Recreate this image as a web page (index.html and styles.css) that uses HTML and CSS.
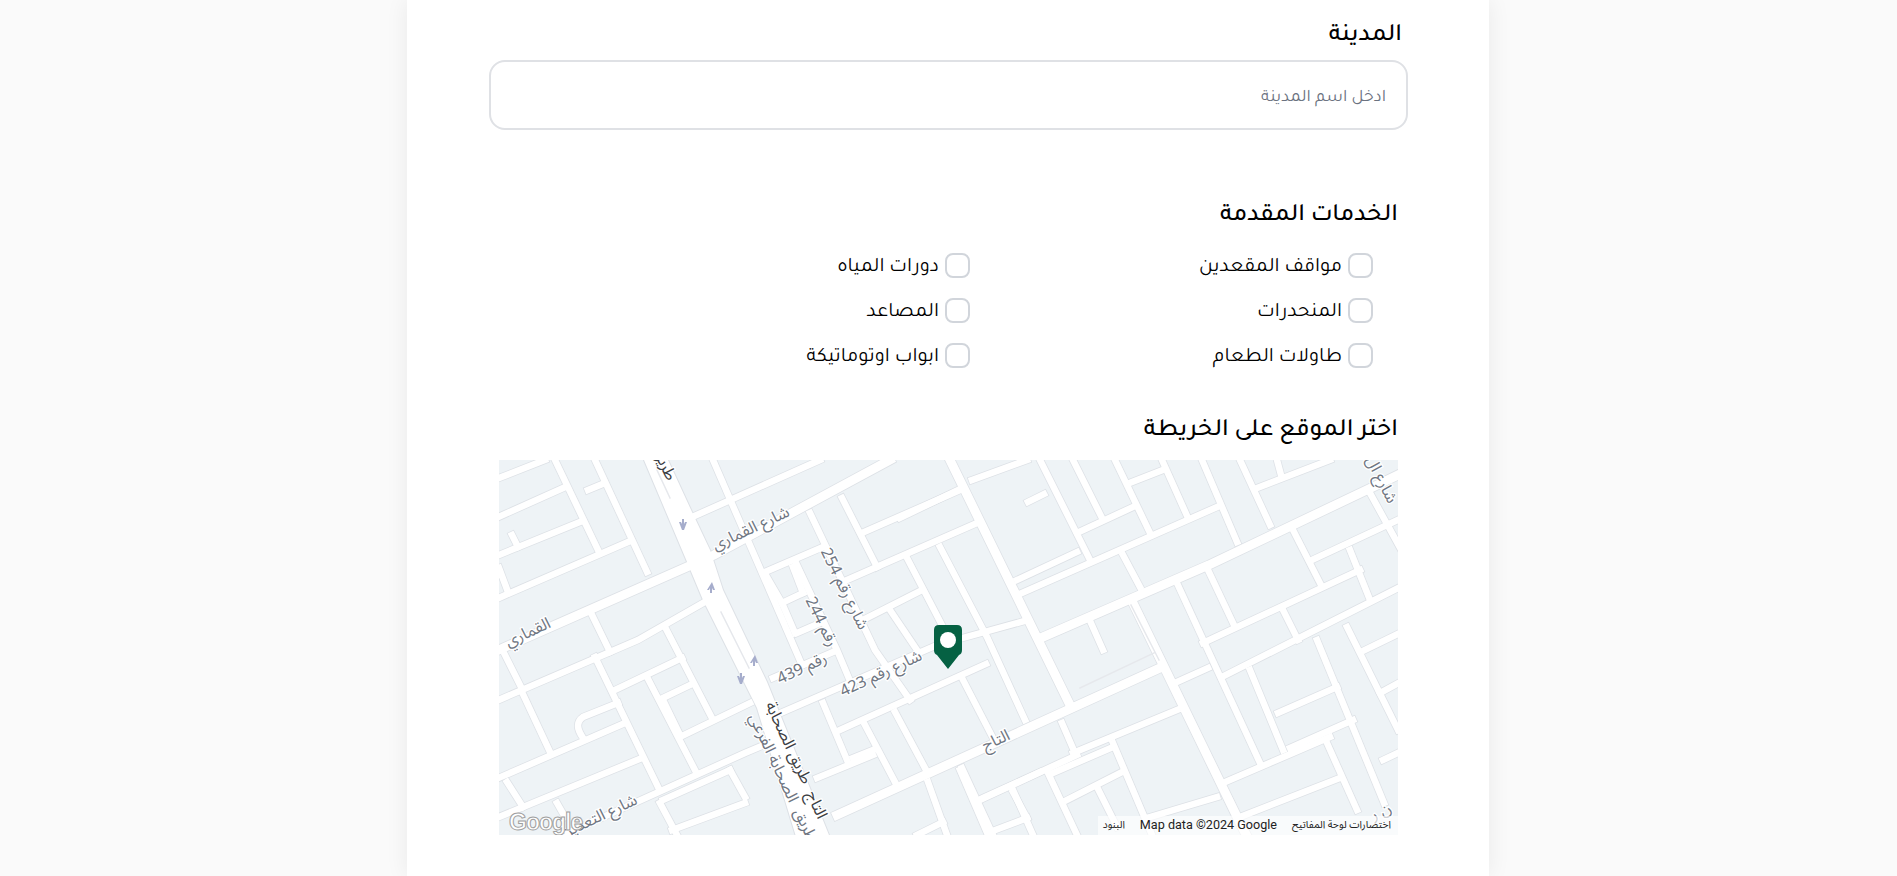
FILE: index.html
```html
<!DOCTYPE html>
<html lang="ar" dir="rtl">
<head>
<meta charset="utf-8">
<title>المدينة</title>
<link rel="stylesheet" href="styles.css">
</head>
<body>
<main class="card">
  <section class="city">
    <label class="city-label" for="city">المدينة</label>
    <input class="city-input" id="city" type="text" placeholder="ادخل اسم المدينة">
  </section>

  <section class="services">
    <h2 class="section-title">الخدمات المقدمة</h2>
    <div class="service-grid">
      <label class="service"><span class="check"></span><span class="service-name">مواقف المقعدين</span></label>
      <label class="service"><span class="check"></span><span class="service-name">دورات المياه</span></label>
      <label class="service"><span class="check"></span><span class="service-name">المنحدرات</span></label>
      <label class="service"><span class="check"></span><span class="service-name">المصاعد</span></label>
      <label class="service"><span class="check"></span><span class="service-name">طاولات الطعام</span></label>
      <label class="service"><span class="check"></span><span class="service-name">ابواب اوتوماتيكة</span></label>
    </div>
  </section>

  <section class="location">
    <h2 class="section-title">اختر الموقع على الخريطة</h2>
    <div class="map">
      <svg class="map-art" viewBox="0 0 899 375" width="899" height="375" aria-hidden="true">
        <defs>
          <g id="wide">
            <path d="M-5 192L215 95L391 0"/>
            <path d="M338 355L661 208"/>
            <path d="M544 177L710 105L874 27L905 12"/>
            <path d="M451 0L570 243"/>
            <path d="M634 143L741 363L750 380"/>
          </g>
          <g id="narrow">
            <path d="M-5 20L46 0"/><path d="M-5 59L64 28"/><path d="M-5 97L81 62"/><path d="M-5 140L129 82"/>
            <path d="M56 0L99 90"/><path d="M96 0L148 112"/><path d="M0 108L9 132"/>
            <path d="M13 75L19 87"/><path d="M89 30L106 23"/>
            <path d="M93 155L111 192"/><path d="M-5 242L139 180L204 143"/>
            <path d="M6 195L21 225"/><path d="M23 232L51 292"/>
            <path d="M96 197L159 327"/><path d="M148 217L196 310"/><path d="M164 240L181 275"/>
            <path d="M166 167L213 258"/><path d="M116 230L183 198"/><path d="M164 238L191 225"/>
            <path d="M181 277L251 243"/>
            <path d="M-5 320L126 263"/><path d="M-5 359L143 298"/><path d="M69 373L246 293L272 282"/>
            <path d="M84 278Q74 264 84 257L119 243"/>
            <path d="M8 322L24 347"/><path d="M58 343L66 357"/><path d="M161 343L178 375"/><path d="M231 310L246 337"/>
            <path d="M164 340L231 310"/><path d="M173 370L246 343"/>
            <path d="M191 58L321 0"/>
            <path d="M214 0L303 205"/>
            <path d="M363 73L461 30"/><path d="M348 120L478 63"/><path d="M266 112L324 87"/>
            <path d="M283 143L304 133"/><path d="M298 173L321 163"/><path d="M364 160L423 130"/>
            <path d="M268 117L283 143L296 173"/><path d="M294 107L304 133"/>
            <path d="M297 103L338 190L354 228"/>
            <path d="M311 53L376 190L411 240"/><path d="M343 38L378 107"/>
            <path d="M408 98L444 167"/><path d="M441 87L488 177L526 260"/><path d="M391 150L418 190"/>
            <path d="M274 218L334 192"/><path d="M284 252L438 185L529 160"/>
            <path d="M341 270L487 204"/><path d="M318 318L374 295"/>
            <path d="M324 243L348 300"/><path d="M366 265L396 322"/><path d="M396 252L426 308"/>
            <path d="M463 218L494 278"/>
            <path d="M429 322L448 375"/><path d="M463 308L494 375"/><path d="M514 332L528 358"/>
            <path d="M484 338L541 312"/><path d="M418 375L444 362"/><path d="M491 372L528 358"/>
            <path d="M354 298L374 290"/>
            <path d="M401 58L459 30"/><path d="M473 20L528 0"/><path d="M518 120L578 92"/>
            <path d="M578 73L634 47"/><path d="M633 22L664 10"/><path d="M523 133L718 47"/>
            <path d="M541 0L591 100"/><path d="M574 0L604 60"/><path d="M616 0L651 73"/>
            <path d="M663 0L689 58"/><path d="M703 0L738 82"/><path d="M741 0L771 65"/>
            <path d="M778 0L782 15"/><path d="M624 95L641 127"/>
            <path d="M678 123L761 303"/><path d="M709 110L734 163"/><path d="M794 70L821 123"/>
            <path d="M784 150L799 180"/><path d="M751 210L784 290"/><path d="M851 90L871 140"/>
            <path d="M818 180L885 343"/><path d="M848 167L899 270"/><path d="M871 33L905 95"/>
            <path d="M563 263L576 293"/><path d="M614 283L653 375"/><path d="M549 313L578 375"/>
            <path d="M514 330L534 375"/><path d="M598 327L618 367"/><path d="M828 283L858 350"/>
            <path d="M461 310L489 375"/>
            <path d="M481 340L578 295"/><path d="M554 313L614 287"/>
            <path d="M568 340L621 313"/><path d="M574 293L678 250"/><path d="M724 323L831 277"/>
            <path d="M741 357L841 318"/><path d="M651 357L718 337"/><path d="M678 222L709 208"/>
            <path d="M704 183L861 110"/><path d="M723 217L905 125"/><path d="M779 253L838 227"/>
            <path d="M791 288L854 260"/><path d="M813 100L905 57"/>
            <path d="M866 190L905 171"/><path d="M881 233L905 220"/>
            <path d="M884 300L905 290"/><path d="M758 28L831 0"/>
            <path d="M592 163L604 190"/><path d="M529 42L545 34"/>
          </g>
        </defs>
        <rect class="land" width="899" height="375"/>
        <use class="casing casing-wide" href="#wide"/>
        <use class="casing" href="#narrow"/>
        <polygon class="trunk-edge" points="145,0 186,97 204,140 258,248 298,380 332,380 268,222 224,130 211,90 193,52 169,0"/>
        <use class="road road-wide" href="#wide"/>
        <use class="road" href="#narrow"/>
        <polygon class="trunk" points="145,0 186,97 204,140 258,248 298,380 332,380 268,222 224,130 211,90 193,52 169,0"/>
        <path class="median" d="M158 10L171 38M222 152L250 208M632 145L660 200M581 228L655 193"/>
        <path class="arrow" d="M183 70l-3-8h2l1 2v-5h2v5l1-2h2l-3 8zM213 122l3 8h-2l-1-2v5h-2v-5l-1 2h-2zM256 195l3 8h-2l-1-2v5h-2v-5l-1 2h-2zM241 224l-3-8h2l1 2v-5h2v5l1-2h2l-3 8z"/>
        <text class="label label-dark" transform="translate(161 6) rotate(65)">طريق</text>
        <text class="label" transform="translate(254 73) rotate(-25)">شارع القماري</text>
        <text class="label" transform="translate(31 177) rotate(-25)">القماري</text>
        <text class="label" transform="translate(341 131) rotate(64)">شارع رقم 254</text>
        <text class="label" transform="translate(318 164) rotate(64)">رقم 244</text>
        <text class="label" transform="translate(305 213) rotate(-25)">رقم 439</text>
        <text class="label" transform="translate(384 218) rotate(-25)">شارع رقم 423</text>
        <text class="label" transform="translate(499 285) rotate(-25)">التاج</text>
        <text class="label label-dark" transform="translate(285 285) rotate(65)">طريق الصحابة</text>
        <text class="label" transform="translate(270 300) rotate(65)">الصحابة الفرعي</text>
        <text class="label label-dark" transform="translate(313 347) rotate(65)">التاج</text>
        <text class="label" transform="translate(302 367) rotate(65)">طريق</text>
        <text class="label" transform="translate(102 361) rotate(-25)">شارع التعدين</text>
        <text class="label" transform="translate(878 22) rotate(63)">شارع ال</text>
        <text class="label" transform="translate(884 356) rotate(-25)">ن ر</text>
        <g transform="translate(435 165)">
          <path class="pin" d="M5 0H23Q28 0 28 5V25Q28 29 25 30L14 44L3 30Q0 29 0 25V5Q0 0 5 0Z"/>
          <circle class="pin-hole" cx="14" cy="15" r="8"/>
        </g>
      </svg>
      <span class="google">Google</span>
      <div class="attribution">
        <span class="attr-ar">اختصارات لوحة المفاتيح</span>
        <span class="attr-en">Map data ©2024 Google</span>
        <span class="attr-ar">البنود</span>
      </div>
    </div>
  </section>
</main>
</body>
</html>
```
FILE: styles.css
```css
html, body {
  margin: 0;
  height: 876px;
  overflow: hidden;
  background: #fafafa;
}
body {
  padding-right: 1px;
  font-family: "Tajawal", "Noto Kufi Arabic", "DejaVu Sans", sans-serif;
  font-weight: 500;
  color: #000;
}
.card {
  box-sizing: border-box;
  width: 1082px;
  height: 876px;
  margin: 0 auto;
  padding: 0 91px 0 92px;
  background: #fff;
  box-shadow: 0 0 22px rgba(0, 0, 0, 0.07);
}
.city {
  display: flex;
  flex-direction: column;
  padding-top: 18px;
  margin: 0 -10px;
}
.city-label {
  box-sizing: border-box;
  height: 34px;
  margin-bottom: 8px;
  padding: 5px 6px 0 0;
  font-size: 25px;
  line-height: 28px;
}
.city-input {
  box-sizing: border-box;
  height: 70px;
  padding: 6px 20px 0;
  border: 2px solid #dfe1e5;
  border-radius: 16px;
  outline: none;
  font: 17.5px "Tajawal", "DejaVu Sans", sans-serif;
  background: #fff;
}
.city-input::placeholder {
  color: #6b7280;
  opacity: 1;
}
.services {
  margin-top: 68px;
}
.section-title {
  margin: 0;
  padding-top: 5px;
  font-size: 25px;
  font-weight: 500;
  line-height: 28px;
}
.service-grid {
  display: grid;
  grid-template-columns: 403px 403px;
  row-gap: 20px;
  padding: 22px 25px 0 0;
}
.service {
  display: flex;
  align-items: center;
  gap: 6px;
  height: 25px;
  font-size: 20.4px;
  font-weight: 400;
  white-space: nowrap;
}
.service-name {
  padding-top: 4px;
}
.check {
  flex: none;
  box-sizing: border-box;
  width: 25px;
  height: 25px;
  border: 2px solid #d1d5db;
  border-radius: 8px;
}
.location {
  margin-top: 45px;
}
.map {
  position: relative;
  width: 899px;
  height: 375px;
  margin-top: 14px;
  overflow: hidden;
}
.map-art {
  display: block;
}
.land {
  fill: #eef3f6;
}
.casing,
.road,
.median {
  fill: none;
  stroke-linecap: square;
}
.casing {
  stroke: #dde1e6;
  stroke-width: 8px;
}
.casing-wide {
  stroke-width: 10.5px;
}
.road {
  stroke: #fff;
  stroke-width: 6.5px;
}
.road-wide {
  stroke-width: 9px;
}
.trunk {
  fill: #fff;
}
.trunk-edge {
  fill: #fff;
  stroke: #dde1e6;
  stroke-width: 2px;
}
.median {
  stroke: #e6e8ec;
  stroke-width: 1.5px;
}
.arrow {
  fill: #a6adcc;
}
.label {
  font-family: "Noto Sans Arabic", "DejaVu Sans", sans-serif;
  font-size: 16px;
  font-weight: 400;
  fill: #6f7682;
  stroke: #fff;
  stroke-width: 2.5px;
  paint-order: stroke;
  text-anchor: middle;
}
.label-dark {
  fill: #3c4043;
}
.pin {
  fill: #056143;
}
.pin-hole {
  fill: #fff;
}
.google {
  position: absolute;
  left: 10px;
  bottom: 0;
  font: 700 23px/26px "Liberation Sans", sans-serif;
  letter-spacing: -1px;
  color: #fff;
  -webkit-text-stroke: 1px #a0a0a0;
}
.attribution {
  position: absolute;
  right: 0;
  bottom: 0;
  display: flex;
  align-items: center;
  gap: 15px;
  height: 17px;
  padding: 0 7px 2px 5px;
  background: rgba(255, 255, 255, 0.65);
  color: #222;
  font-weight: 400;
}
.attr-en {
  font: 12.6px "Roboto", sans-serif;
  direction: ltr;
}
.attr-ar {
  font: 10.4px "Noto Sans Arabic", "DejaVu Sans", sans-serif;
}
```
